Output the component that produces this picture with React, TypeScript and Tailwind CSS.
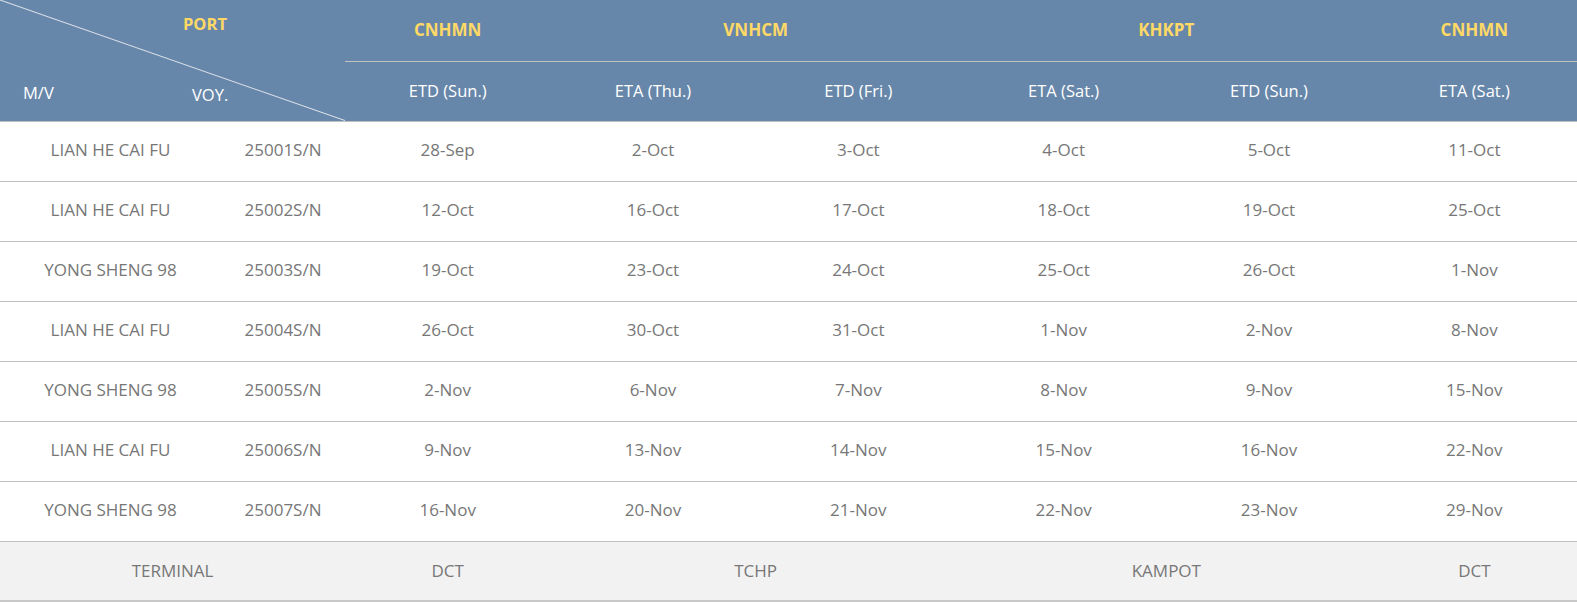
import React from "react";

const rows = [
  ["LIAN HE CAI FU", "25001S/N", "28-Sep", "2-Oct", "3-Oct", "4-Oct", "5-Oct", "11-Oct"],
  ["LIAN HE CAI FU", "25002S/N", "12-Oct", "16-Oct", "17-Oct", "18-Oct", "19-Oct", "25-Oct"],
  ["YONG SHENG 98", "25003S/N", "19-Oct", "23-Oct", "24-Oct", "25-Oct", "26-Oct", "1-Nov"],
  ["LIAN HE CAI FU", "25004S/N", "26-Oct", "30-Oct", "31-Oct", "1-Nov", "2-Nov", "8-Nov"],
  ["YONG SHENG 98", "25005S/N", "2-Nov", "6-Nov", "7-Nov", "8-Nov", "9-Nov", "15-Nov"],
  ["LIAN HE CAI FU", "25006S/N", "9-Nov", "13-Nov", "14-Nov", "15-Nov", "16-Nov", "22-Nov"],
  ["YONG SHENG 98", "25007S/N", "16-Nov", "20-Nov", "21-Nov", "22-Nov", "23-Nov", "29-Nov"],
];

const subHeads = ["ETD (Sun.)", "ETA (Thu.)", "ETD (Fri.)", "ETA (Sat.)", "ETD (Sun.)", "ETA (Sat.)"];

export default function App() {
  return (
    <div
      className="w-[1577px] bg-white text-[17px] text-[#777777]"
      style={{ fontFamily: '"Open Sans", "Segoe UI", sans-serif' }}
    >
      <table className="w-full table-fixed border-collapse">
        <colgroup>
          <col className="w-[221px]" />
          <col className="w-[124px]" />
          <col />
          <col />
          <col />
          <col />
          <col />
          <col />
        </colgroup>
        <thead className="bg-[#6787aa] text-white">
          <tr className="h-[61px]">
            <th colSpan={2} rowSpan={2} className="relative p-0 font-normal border-b border-[#c0c0c0]">
              <svg className="absolute inset-0 h-full w-full" viewBox="0 0 345 120" preserveAspectRatio="none">
                <line x1="0" y1="0" x2="345" y2="120" stroke="#dde3ea" strokeWidth="1" />
              </svg>
              <div className="relative flex h-[120px] flex-col justify-between pt-[12px] pb-[13px] text-[16.5px]">
                <div className="pl-[183px] text-left font-bold text-[#ffd966]">PORT</div>
                <div className="flex items-center text-left">
                  <span className="w-[192px] pl-[23px]">M/V</span>
                  <span className="pt-[3px]">VOY.</span>
                </div>
              </div>
            </th>
            <th className="border-b border-[#c0c0c0] pb-[2px] font-bold text-[#ffd966]">CNHMN</th>
            <th colSpan={2} className="border-b border-[#c0c0c0] pb-[2px] font-bold text-[#ffd966]">VNHCM</th>
            <th colSpan={2} className="border-b border-[#c0c0c0] pb-[2px] font-bold text-[#ffd966]">KHKPT</th>
            <th className="border-b border-[#c0c0c0] pb-[2px] font-bold text-[#ffd966]">CNHMN</th>
          </tr>
          <tr className="h-[60px]">
            {subHeads.map((h, i) => (
              <th key={i} className="border-b border-[#c0c0c0] text-[16.5px] font-normal">
                {h}
              </th>
            ))}
          </tr>
        </thead>
        <tbody>
          {rows.map((r, i) => (
            <tr key={i} className="h-[60px] border-b border-[#c0c0c0]">
              {r.map((c, j) => (
                <td key={j} className="pb-[2px] text-center">
                  {c}
                </td>
              ))}
            </tr>
          ))}
          <tr className="h-[60px] bg-[#f2f2f2] border-b-2 border-[#c8c8c8]">
            <td colSpan={2} className="text-center">TERMINAL</td>
            <td className="text-center">DCT</td>
            <td colSpan={2} className="text-center">TCHP</td>
            <td colSpan={2} className="text-center">KAMPOT</td>
            <td className="text-center">DCT</td>
          </tr>
        </tbody>
      </table>
    </div>
  );
}
